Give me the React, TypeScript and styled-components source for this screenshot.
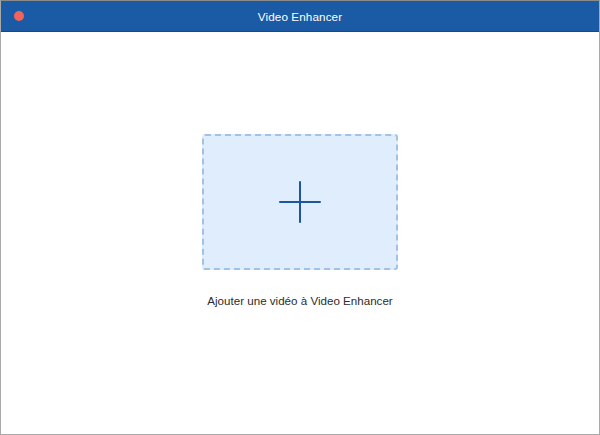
import React from "react";
import styled, { createGlobalStyle } from "styled-components";

const Global = createGlobalStyle`
  html, body { margin: 0; padding: 0; background: #ffffff; }
  body { font-family: "Liberation Sans", Arial, sans-serif; }
`;

const Window = styled.div`
  width: 600px;
  height: 435px;
  box-sizing: border-box;
  border: 1px solid #a9a9a9;
  border-top-color: #8a8a8a;
  display: flex;
  flex-direction: column;
  background: #ffffff;
`;

const TitleBar = styled.div`
  height: 30px;
  background: #1b5aa5;
  border-bottom: 1px solid #16498a;
  display: flex;
  align-items: center;
  justify-content: center;
  position: relative;
  flex-shrink: 0;
`;

const CloseDot = styled.span`
  position: absolute;
  left: 13px;
  top: 10px;
  width: 10px;
  height: 10px;
  border-radius: 50%;
  background: #f2645a;
`;

const Title = styled.div`
  color: #ffffff;
  font-family: "Liberation Sans", Arial, sans-serif;
  font-size: 11.7px;
  letter-spacing: 0.1px;
`;

const Body = styled.div`
  flex: 1;
  display: flex;
  flex-direction: column;
  align-items: center;
  padding-top: 102px;
`;

const DropZone = styled.div`
  width: 196px;
  height: 136px;
  box-sizing: border-box;
  border: 2px dashed #a3c1e5;
  border-radius: 3px;
  background: #e0edfd;
  display: flex;
  align-items: center;
  justify-content: center;
`;

const Caption = styled.div`
  margin-top: 24px;
  font-family: "Liberation Sans", Arial, sans-serif;
  font-size: 11.6px;
  color: #2c2c2c;
`;

export default function App() {
  return (
    <>
      <Global />
      <Window>
        <TitleBar>
          <CloseDot />
          <Title>Video Enhancer</Title>
        </TitleBar>
        <Body>
          <DropZone>
            <svg width="42" height="42" viewBox="0 0 42 42">
              <path d="M21 1V41M1 21H41" stroke="#1d55a0" strokeWidth="2" strokeLinecap="round" fill="none" />
            </svg>
          </DropZone>
          <Caption>Ajouter une vidéo à Video Enhancer</Caption>
        </Body>
      </Window>
    </>
  );
}
